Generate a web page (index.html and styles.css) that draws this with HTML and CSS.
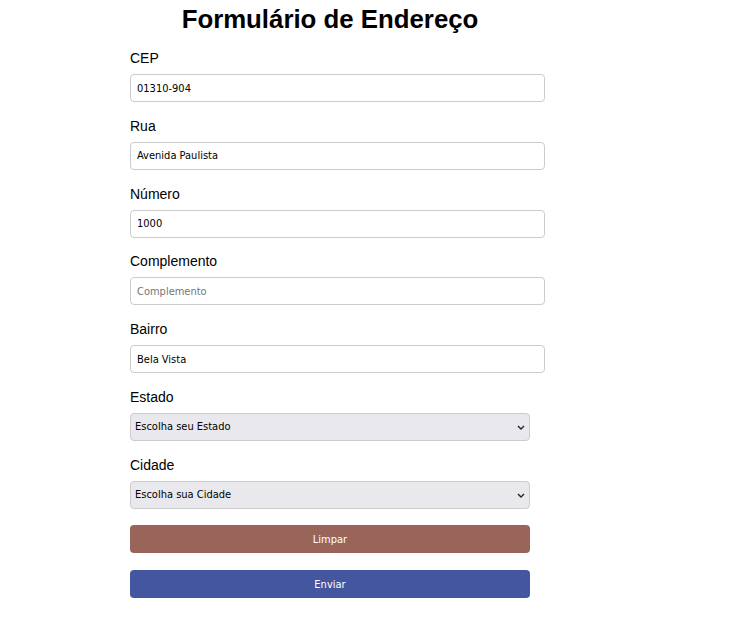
FILE: index.html
```html
<!DOCTYPE html>
<html lang="pt-BR">
<head>
<meta charset="utf-8">
<title>Formulário de Endereço</title>
<link rel="stylesheet" href="styles.css">
</head>
<body>
<form class="form">
  <h1 class="title">Formulário de Endereço</h1>
  <div class="field">
    <label class="label" for="cep">CEP</label>
    <input class="input" id="cep" type="text" value="01310-904">
  </div>
  <div class="field">
    <label class="label" for="rua">Rua</label>
    <input class="input" id="rua" type="text" value="Avenida Paulista">
  </div>
  <div class="field">
    <label class="label" for="numero">Número</label>
    <input class="input" id="numero" type="text" value="1000">
  </div>
  <div class="field">
    <label class="label" for="comp">Complemento</label>
    <input class="input" id="comp" type="text" placeholder="Complemento">
  </div>
  <div class="field">
    <label class="label" for="bairro">Bairro</label>
    <input class="input" id="bairro" type="text" value="Bela Vista">
  </div>
  <div class="field">
    <label class="label" for="estado">Estado</label>
    <div class="select-wrap">
      <select class="select" id="estado"><option>Escolha seu Estado</option></select>
      <svg class="chev" width="8" height="5" viewBox="0 0 8 5"><path d="M1 1 L4 4 L7 1" fill="none" stroke="#222" stroke-width="1.4"/></svg>
    </div>
  </div>
  <div class="field">
    <label class="label" for="cidade">Cidade</label>
    <div class="select-wrap">
      <select class="select" id="cidade"><option>Escolha sua Cidade</option></select>
      <svg class="chev" width="8" height="5" viewBox="0 0 8 5"><path d="M1 1 L4 4 L7 1" fill="none" stroke="#222" stroke-width="1.4"/></svg>
    </div>
  </div>
  <div class="buttons">
    <button type="reset" class="btn btn-clear">Limpar</button>
    <button type="submit" class="btn btn-send">Enviar</button>
  </div>
</form>
</body>
</html>
```

FILE: styles.css
```css
html, body {
  margin: 0;
  padding: 0;
  background: #ffffff;
}
body {
  font-family: "Liberation Sans", Arial, sans-serif;
  color: #000;
}
.form {
  width: 400px;
  margin-left: 130px;
  padding-top: 4px;
}
.title {
  margin: 0 0 16px 0;
  font-size: 25.8px;
  line-height: 30px;
  font-weight: bold;
  text-align: center;
  white-space: nowrap;
}
.field {
  margin-bottom: 15.75px;
}
.label {
  display: block;
  font-size: 14px;
  line-height: 16px;
  margin-bottom: 8px;
}
.input {
  display: block;
  width: 400px;
  height: 26px;
  margin: 0;
  padding: 0 7px 0 6px;
  border: 1px solid #cccccc;
  border-radius: 4px;
  font-family: "DejaVu Sans Condensed", "DejaVu Sans", Tahoma, sans-serif;
  font-size: 11px;
  color: #000;
  background: #fff;
  outline: none;
}
.input::placeholder {
  color: #757575;
}
.select-wrap {
  position: relative;
  width: 400px;
}
.select {
  display: block;
  width: 400px;
  height: 28px;
  margin: 0;
  padding: 0 4px;
  border: 1px solid #cccccc;
  border-radius: 4px;
  background: #e9e9ed;
  font-family: "DejaVu Sans Condensed", "DejaVu Sans", Tahoma, sans-serif;
  font-size: 11px;
  color: #000;
  appearance: none;
  -webkit-appearance: none;
}
.chev {
  position: absolute;
  right: 5px;
  top: 12px;
  pointer-events: none;
}
.buttons {
  display: flex;
  flex-direction: column;
  gap: 17px;
  padding-top: 0.75px;
}
.btn {
  display: block;
  width: 400px;
  height: 28px;
  margin: 0;
  border: none;
  border-radius: 4px;
  color: #ffffff;
  font-family: "DejaVu Sans Condensed", "DejaVu Sans", Tahoma, sans-serif;
  font-size: 11px;
  cursor: pointer;
}
.btn-clear {
  background: #99655a;
}
.btn-send {
  background: #4456a0;
}
```
